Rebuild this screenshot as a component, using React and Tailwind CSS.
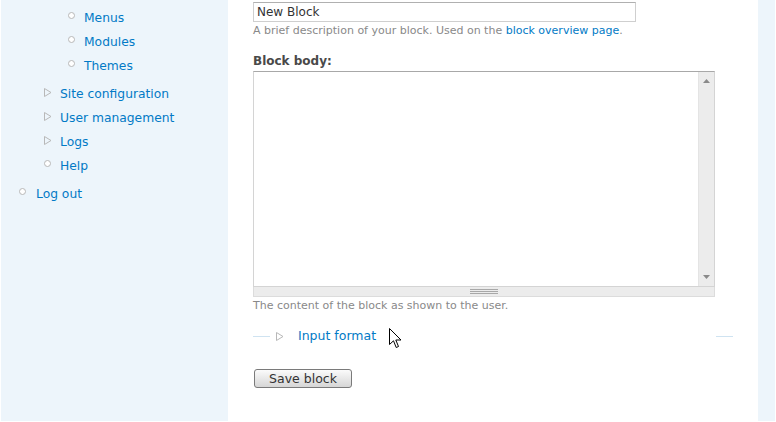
import React from "react";

const Circle = () => (
  <span className="block w-[7px] h-[7px] rounded-full border border-[#b8b8b8] bg-white" />
);

const Tri = () => (
  <svg width="8" height="9" viewBox="0 0 8 9" className="block">
    <path d="M0.5 0.5 L7 4.5 L0.5 8.5 Z" fill="none" stroke="#b8b8b8" strokeWidth="1" />
  </svg>
);

function Item({ pl, w, icon, label, pt, mt }) {
  return (
    <li className={`h-[24px] flex items-center ${pl} ${mt || ""}`}>
      <span className={`${w} h-[24px] flex flex-col ${pt}`}>{icon}</span>
      <a className="text-[#027ac6] text-[12.3px] leading-[24px]">{label}</a>
    </li>
  );
}

export default function App() {
  return (
    <div className="w-[776px] h-[422px] bg-white flex font-['DejaVu_Sans',sans-serif] overflow-hidden">
      <div className="w-[1px] shrink-0" />
      <aside className="w-[227px] h-[421px] shrink-0 bg-[#edf5fb] pt-[6px]">
        <ul>
          <Item pl="pl-[67px]" w="w-[16px]" pt="pt-[6px]" icon={<Circle />} label="Menus" />
          <Item pl="pl-[67px]" w="w-[16px]" pt="pt-[6px]" icon={<Circle />} label="Modules" />
          <Item pl="pl-[67px]" w="w-[16px]" pt="pt-[6px]" icon={<Circle />} label="Themes" />
          <Item pl="pl-[43px]" w="w-[16px]" pt="pt-[6px]" mt="mt-[4px]" icon={<Tri />} label="Site configuration" />
          <Item pl="pl-[43px]" w="w-[16px]" pt="pt-[6px]" icon={<Tri />} label="User management" />
          <Item pl="pl-[43px]" w="w-[16px]" pt="pt-[6px]" icon={<Tri />} label="Logs" />
          <Item pl="pl-[43px]" w="w-[16px]" pt="pt-[6px]" icon={<Circle />} label="Help" />
          <Item pl="pl-[18px]" w="w-[17px]" pt="pt-[6px]" mt="mt-[4px]" icon={<Circle />} label="Log out" />
        </ul>
      </aside>
      <main className="w-[530px] h-[421px] shrink-0 relative pl-[25px] pt-[2px]">
        <div className="w-[383px] h-[20px] border border-[#cfcfcf] border-t-[#b0b0b0] flex items-center pl-[3px] text-[12px] text-[#333]">
          New Block
        </div>
        <div className="mt-[2px] text-[11px] text-[#898989] leading-[14px]">
          A brief description of your block. Used on the{" "}
          <a className="text-[#027ac6]">block overview page</a>.
        </div>
        <div className="mt-[15px] text-[12px] font-bold text-[#494949] leading-[16px]">
          Block body:
        </div>
        <div className="mt-[2px] w-[462px] h-[216px] border border-[#d4d4d4] border-t-[#a8a8a8] flex">
          <div className="flex-1" />
          <div className="w-[16px] bg-[#ececec] border-l border-[#e4e4e4] flex flex-col items-center justify-between py-[7px]">
            <svg width="7" height="4" viewBox="0 0 7 4"><path d="M3.5 0 L7 4 L0 4 Z" fill="#8a8a8a" /></svg>
            <svg width="7" height="4" viewBox="0 0 7 4"><path d="M0 0 L7 0 L3.5 4 Z" fill="#8a8a8a" /></svg>
          </div>
        </div>
        <div className="w-[462px] h-[10px] bg-[#ececec] border border-t-0 border-[#dcdcdc] flex items-center justify-center">
          <svg width="28" height="6" viewBox="0 0 28 6">
            <rect x="0" y="0" width="28" height="1" fill="#a8a8a8" />
            <rect x="0" y="2" width="28" height="1" fill="#a8a8a8" />
            <rect x="0" y="4" width="28" height="1" fill="#a8a8a8" />
          </svg>
        </div>
        <div className="mt-[2px] text-[11px] text-[#898989] leading-[14px]">
          The content of the block as shown to the user.
        </div>
        <div className="mt-[13px] w-[480px] h-[20px] flex items-center">
          <div className="w-[17px] h-[1px] bg-[#cfe3f1]" />
          <div className="ml-[6px] w-[22px]"><Tri /></div>
          <a className="text-[#027ac6] text-[12.5px]">Input format</a>
          <div className="flex-1" />
          <div className="w-[17px] h-[1px] bg-[#cfe3f1]" />
        </div>
        <button className="mt-[23px] ml-[1px] w-[98px] h-[19px] rounded-[3px] border border-[#7a7a7a] bg-gradient-to-b from-[#fbfbfb] to-[#d6d6d6] text-[12.5px] text-[#333] leading-[16px]">
          Save block
        </button>
        <svg className="absolute left-[161px] top-[328px]" width="13" height="21" viewBox="0 0 13 21">
          <path d="M0.5 0.5 L0.5 16.5 L4.5 12.8 L7.2 19.5 L9.5 18.5 L6.8 12 L12 12 Z" fill="white" stroke="black" strokeWidth="1" strokeLinejoin="miter" />
        </svg>
      </main>
      <div className="w-[17px] h-[421px] shrink-0 bg-[#edf5fb]" />
    </div>
  );
}
